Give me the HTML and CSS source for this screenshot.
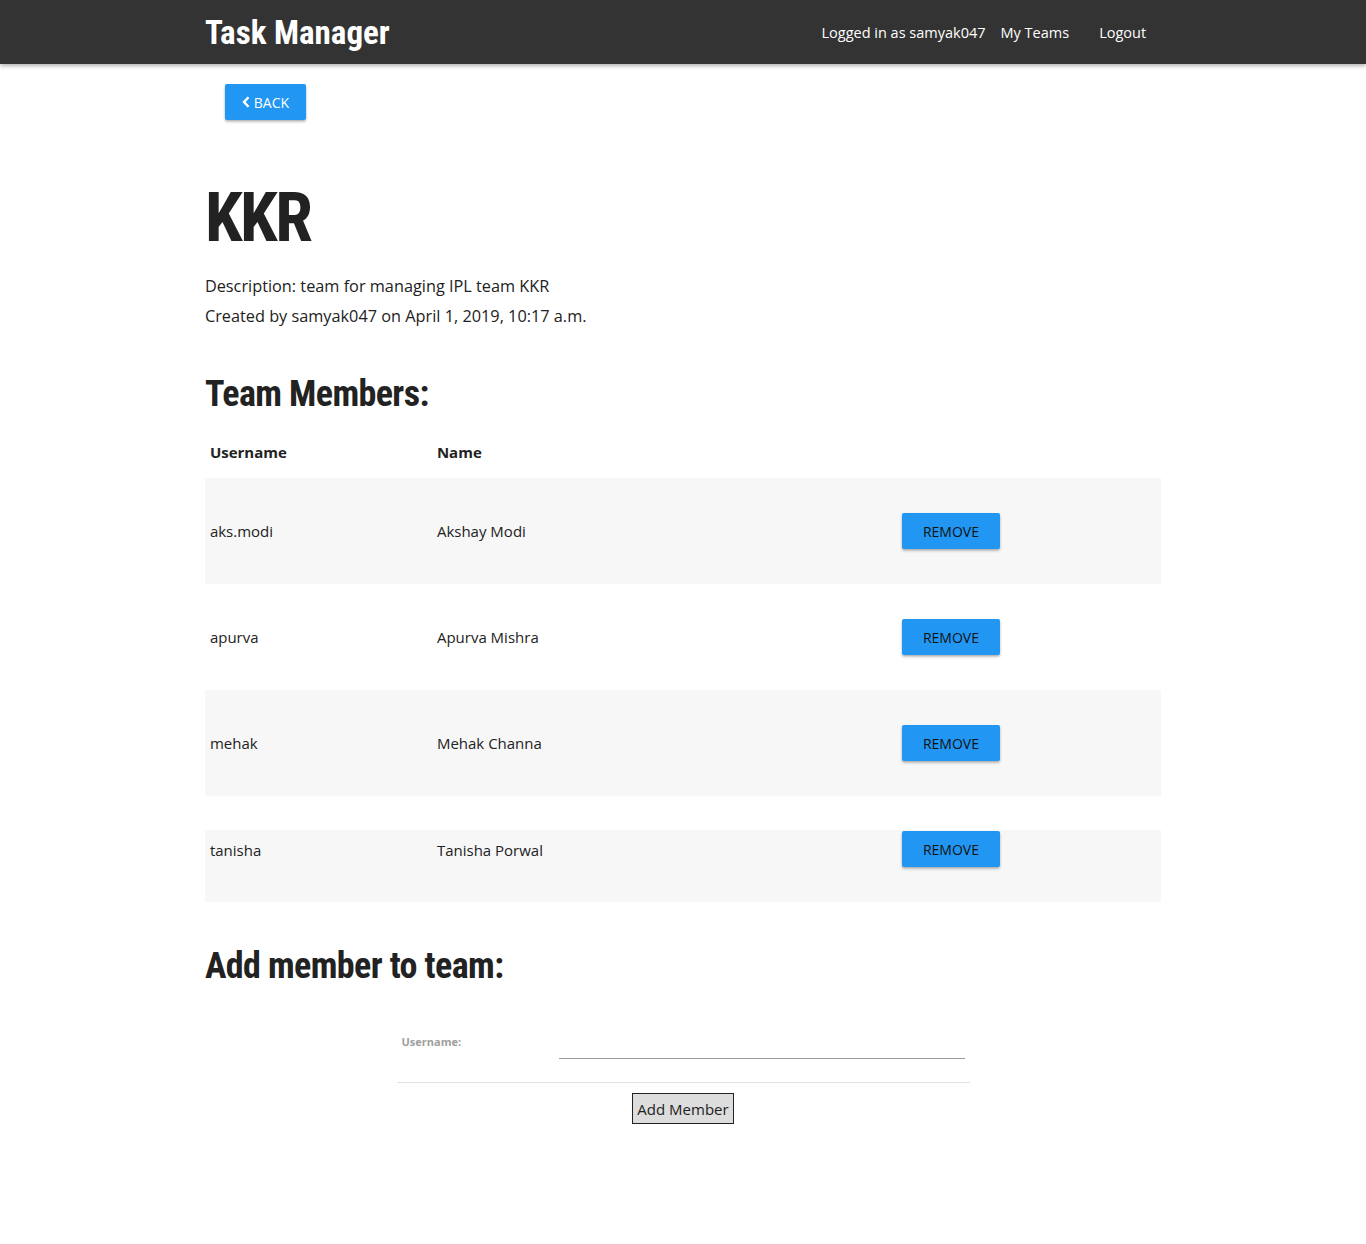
FILE: index.html
```html
<!DOCTYPE html>
<html>
<head>
<meta charset="utf-8">
<title>Task Manager</title>
<link rel="stylesheet" href="styles.css">
</head>
<body>
<nav class="navbar">
  <div class="nav-inner">
    <a class="brand" href="#">Task Manager</a>
    <ul class="nav-links">
      <li class="nav-user">Logged in as samyak047</li>
      <li><a href="#">My Teams</a></li>
      <li class="nav-logout"><a href="#">Logout</a></li>
    </ul>
  </div>
</nav>
<main class="container">
  <div class="back-wrap">
    <a class="btn btn-back" href="#"><svg class="chev" width="8" height="12" viewBox="0 0 8 12"><path d="M6.5 1.2 L2 6 L6.5 10.8" fill="none" stroke="#fff" stroke-width="2.4"/></svg>BACK</a>
  </div>
  <h1 class="team-title">KKR</h1>
  <p class="meta">Description: team for managing IPL team KKR</p>
  <p class="meta">Created by samyak047 on April 1, 2019, 10:17 a.m.</p>

  <h2 class="section-title members-title">Team Members:</h2>
  <div class="members">
    <div class="row head">
      <div class="c-user">Username</div>
      <div class="c-name">Name</div>
      <div class="c-act"></div>
    </div>
    <div class="row member gray">
      <div class="c-user">aks.modi</div>
      <div class="c-name">Akshay Modi</div>
      <div class="c-act"><button class="btn btn-remove">REMOVE</button></div>
    </div>
    <div class="row member">
      <div class="c-user">apurva</div>
      <div class="c-name">Apurva Mishra</div>
      <div class="c-act"><button class="btn btn-remove">REMOVE</button></div>
    </div>
    <div class="row member gray">
      <div class="c-user">mehak</div>
      <div class="c-name">Mehak Channa</div>
      <div class="c-act"><button class="btn btn-remove">REMOVE</button></div>
    </div>
    <div class="row member last gray">
      <div class="c-user">tanisha</div>
      <div class="c-name">Tanisha Porwal</div>
      <div class="c-act"><button class="btn btn-remove">REMOVE</button></div>
    </div>
  </div>

  <h2 class="section-title add-title">Add member to team:</h2>
  <form class="add-form">
    <div class="field">
      <label class="field-label">Username:</label>
      <div class="field-input"><input type="text"></div>
    </div>
    <hr class="form-rule">
    <div class="submit-wrap"><button type="button" class="btn-submit">Add Member</button></div>
  </form>
</main>
</body>
</html>
```

FILE: styles.css
```css
html, body {
  margin: 0;
  padding: 0;
  background: #fff;
}
body {
  font-family: "Open Sans", "Noto Sans", sans-serif;
  color: #222;
  font-size: 15px;
}
a { text-decoration: none; }

.navbar {
  height: 64px;
  background: #333;
  box-shadow: 0 2px 4px rgba(0,0,0,0.3);
}
.nav-inner {
  width: 70%;
  margin: 0 auto;
  height: 64px;
  display: flex;
  align-items: center;
  justify-content: space-between;
}
.brand {
  color: #fff;
  font-family: "Roboto Condensed", "Oswald", sans-serif;
  font-weight: bold;
  font-size: 33px;
}
.nav-links {
  list-style: none;
  margin: 0;
  padding: 0;
  display: flex;
  align-items: center;
  font-size: 14.5px;
  color: #fff;
}
.nav-links li { padding: 0 15px 0 0; }
.nav-links a { color: #fff; }
.nav-links .nav-logout { padding: 0 15px 0 15px; }

.container {
  width: 70%;
  margin: 0 auto;
}
.back-wrap {
  padding: 20px 0 0 20px;
  height: 36px;
}
.btn {
  display: inline-flex;
  align-items: center;
  justify-content: center;
  background: #2196f3;
  border: none;
  border-radius: 2px;
  box-shadow: 0 2px 3px rgba(0,0,0,0.2), 0 1px 2px rgba(0,0,0,0.15);
  font-family: "Open Sans", "Noto Sans", sans-serif;
  cursor: pointer;
}
.btn-back {
  width: 81px;
  height: 36px;
  color: #fff;
  font-size: 14px;
  box-sizing: border-box;
}
.chev { margin-right: 4px; }

.team-title {
  font-family: "Roboto Condensed", "Oswald", sans-serif;
  font-weight: bold;
  font-size: 68px;
  letter-spacing: -2.5px;
  color: #222;
  margin: 64px 0 19px 0;
  line-height: 1;
}
.meta {
  margin: 0;
  font-size: 16.3px;
  line-height: 30px;
  color: #222;
}
.section-title {
  font-family: "Roboto Condensed", "Oswald", sans-serif;
  font-weight: bold;
  font-size: 36px;
  letter-spacing: -0.6px;
  color: #222;
  line-height: 1;
  margin: 0;
}
.members-title { margin-top: 45px; }

.members {
  margin-top: 18px;
}
.row {
  display: flex;
  align-items: center;
}
.c-user { width: 227px; padding-left: 5px; }
.c-name { width: 465px; }
.c-act { flex: 1; }
.head {
  height: 48px;
  box-sizing: border-box;
  padding-bottom: 4px;
  font-weight: bold;
  font-size: 15px;
}
.member {
  height: 106px;
  font-size: 15px;
}
.member.gray { background: #f7f7f7; }
.member.last {
  margin-top: 34px;
  height: 72px;
  align-items: flex-start;
  padding-top: 1px;
  box-sizing: border-box;
}
.member.last .c-user, .member.last .c-name { padding-top: 9px; }
.btn-remove {
  width: 98px;
  height: 36px;
  color: #111;
  font-size: 14px;
}

.add-title { margin-top: 46px; }

.add-form {
  width: 573px;
  margin: 38px auto 0 auto;
}
.field {
  display: flex;
  align-items: flex-start;
  padding-left: 5px;
}
.field-label {
  width: 157px;
  font-size: 11px;
  font-weight: bold;
  color: #9e9e9e;
  padding-top: 12px;
}
.field-input { flex: 1; padding-right: 5px; }
.field-input input {
  display: block;
  width: 100%;
  box-sizing: border-box;
  border: none;
  border-bottom: 1px solid #9e9e9e;
  height: 37px;
  outline: none;
  background: transparent;
  font-size: 15px;
}
.form-rule {
  border: none;
  border-top: 1px solid #e0e0e0;
  margin: 23px 0 10px 0;
}
.submit-wrap { text-align: center; }
.btn-submit {
  background: #ddd;
  border: 1px solid #222;
  font-family: "Open Sans", "Noto Sans", sans-serif;
  font-size: 15px;
  color: #222;
  width: 102px;
  height: 31px;
  padding: 0;
}
```
